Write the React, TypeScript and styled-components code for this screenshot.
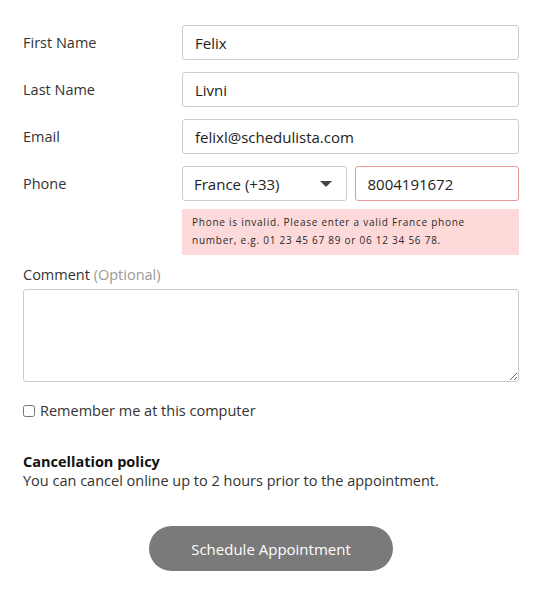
import React from "react";
import styled, { createGlobalStyle } from "styled-components";

const FONT = `"Open Sans", Lato, Arial, sans-serif`;

const Global = createGlobalStyle`
  html, body { margin: 0; padding: 0; background: #fff; }
  body { font-family: ${FONT}; color: #333; }
  * { box-sizing: border-box; }
`;

const Form = styled.form`
  width: 538px;
  padding: 25px 19px 0 23px;
  display: flex;
  flex-direction: column;
`;

const Row = styled.div`
  display: grid;
  grid-template-columns: 159px 1fr;
  align-items: start;
  margin-bottom: 12px;
`;

const Label = styled.label`
  font-size: 14.5px;
  color: #333;
  line-height: 36px;
  height: 35px;
`;

const Muted = styled.span`
  color: #999;
`;

const Field = styled.div`
  display: flex;
  flex-direction: column;
`;

const Input = styled.input<{ $invalid?: boolean }>`
  width: 100%;
  height: 35px;
  border: 1px solid ${(p) => (p.$invalid ? "#e8999b" : "#ccc")};
  border-radius: 3px;
  padding: 0 12px;
  font-family: ${FONT};
  font-size: 15px;
  color: #222;
  background: #fff;
  outline: none;
`;

const PhoneGroup = styled.div`
  display: grid;
  grid-template-columns: 1fr 1fr;
  gap: 8px;
`;

const Select = styled.div`
  height: 35px;
  border: 1px solid #ccc;
  border-radius: 3px;
  padding: 0 14px 0 11px;
  display: flex;
  align-items: center;
  justify-content: space-between;
  font-size: 15px;
  color: #222;
`;

const Caret = styled.span`
  width: 0;
  height: 0;
  border-left: 6px solid transparent;
  border-right: 6px solid transparent;
  border-top: 6px solid #444;
  margin-top: 1px;
`;

const ErrorBox = styled.div`
  margin-top: 8px;
  background: #fdd9d9;
  padding: 4px 10px 6px 10px;
  font-size: 10px;
  letter-spacing: 0.75px;
  line-height: 18px;
  color: #2a2a2a;
`;

const CommentLabel = styled.div`
  font-size: 14.5px;
  line-height: 18px;
  color: #333;
  margin-top: -1px;
  margin-bottom: 5px;
`;

const TextArea = styled.textarea`
  width: 496px;
  height: 93px;
  border: 1px solid #ccc;
  border-radius: 3px;
  outline: none;
  font-family: inherit;
  display: block;
`;

const CheckRow = styled.label`
  display: flex;
  align-items: center;
  gap: 5px;
  margin-top: 20px;
  font-size: 14.5px;
  line-height: 18px;
  color: #333;
`;

const Check = styled.input`
  margin: 0;
  width: 12px;
  height: 12px;
`;

const Policy = styled.div`
  margin-top: 33px;
  display: flex;
  flex-direction: column;
  gap: 1px;
`;

const PolicyTitle = styled.div`
  font-size: 14.5px;
  line-height: 18px;
  font-weight: 700;
  color: #111;
`;

const PolicyText = styled.div`
  font-size: 14.5px;
  line-height: 18px;
  color: #333;
`;

const ButtonWrap = styled.div`
  display: flex;
  justify-content: center;
  margin-top: 36px;
`;

const Button = styled.button`
  width: 244px;
  height: 45px;
  border: none;
  border-radius: 23px;
  background: #7a7a7a;
  color: #fff;
  font-family: ${FONT};
  font-size: 15px;
`;

export default function App() {
  return (
    <>
      <Global />
      <Form onSubmit={(e) => e.preventDefault()}>
        <Row>
          <Label>First Name</Label>
          <Input defaultValue="Felix" />
        </Row>
        <Row>
          <Label>Last Name</Label>
          <Input defaultValue="Livni" />
        </Row>
        <Row>
          <Label>Email</Label>
          <Input defaultValue="felixl@schedulista.com" />
        </Row>
        <Row>
          <Label>Phone</Label>
          <Field>
            <PhoneGroup>
              <Select>
                France (+33)
                <Caret />
              </Select>
              <Input $invalid defaultValue="8004191672" />
            </PhoneGroup>
            <ErrorBox>
              Phone is invalid. Please enter a valid France phone number, e.g. 01 23 45 67 89 or 06 12 34 56 78.
            </ErrorBox>
          </Field>
        </Row>
        <CommentLabel>
          Comment <Muted>(Optional)</Muted>
        </CommentLabel>
        <TextArea />
        <CheckRow>
          <Check type="checkbox" />
          Remember me at this computer
        </CheckRow>
        <Policy>
          <PolicyTitle>Cancellation policy</PolicyTitle>
          <PolicyText>You can cancel online up to 2 hours prior to the appointment.</PolicyText>
        </Policy>
        <ButtonWrap>
          <Button type="submit">Schedule Appointment</Button>
        </ButtonWrap>
      </Form>
    </>
  );
}
